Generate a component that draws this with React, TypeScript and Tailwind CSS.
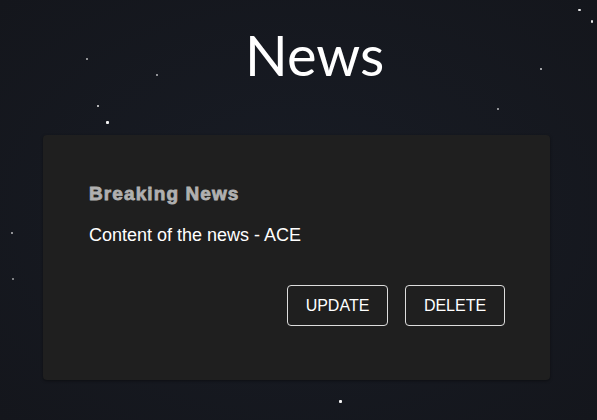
import React from "react";

const stars: { x: number; y: number; w: number; h: number; o: number }[] = [
  { x: 578, y: 9, w: 3, h: 2, o: 0.9 },
  { x: 591, y: 20, w: 2, h: 3, o: 0.9 },
  { x: 540, y: 68, w: 2, h: 2, o: 0.8 },
  { x: 497, y: 108, w: 2, h: 2, o: 0.7 },
  { x: 86, y: 58, w: 2, h: 2, o: 0.7 },
  { x: 156, y: 74, w: 2, h: 2, o: 0.7 },
  { x: 97, y: 105, w: 2, h: 2, o: 0.9 },
  { x: 106, y: 121, w: 3, h: 3, o: 0.95 },
  { x: 11, y: 232, w: 2, h: 2, o: 0.7 },
  { x: 12, y: 278, w: 2, h: 2, o: 0.6 },
  { x: 339, y: 400, w: 3, h: 3, o: 0.95 },
];

export default function App() {
  return (
    <div className="relative w-[597px] h-[420px] overflow-hidden bg-[radial-gradient(ellipse_at_center,#181c25_0%,#14161c_100%)]">
      {stars.map((s, i) => (
        <div
          key={i}
          className="absolute bg-white rounded-[1px]"
          style={{ left: s.x, top: s.y, width: s.w, height: s.h, opacity: s.o }}
        />
      ))}
      <div className="relative flex flex-col pt-[27px] pl-[43px]">
        <h1
          className="ml-[202px] text-[56px] leading-none text-white"
          style={{ fontFamily: "Lato, 'Open Sans', sans-serif", fontWeight: 400 }}
        >
          News
        </h1>
        <div
          className="mt-[52px] w-[507px] h-[245px] bg-[#1f1f1f] rounded-[4px] shadow-[0_1px_3px_rgba(0,0,0,0.4)] pt-[48px] pl-[46px] pr-[45px] flex flex-col"
          style={{ fontFamily: "'Liberation Sans', Arial, sans-serif" }}
        >
          <div className="text-[19px] leading-[22px] font-bold text-[#b0b0b0] tracking-[1.1px] [-webkit-text-stroke:0.8px_#b0b0b0]">
            Breaking News
          </div>
          <div className="mt-[20px] text-[18px] leading-[21px] text-white">
            Content of the news - ACE
          </div>
          <div className="mt-[39px] flex justify-end gap-[17px]">
            <button className="w-[101px] h-[41px] border border-[#dddddd] rounded-[4px] text-white text-[16px] flex items-center justify-center">
              UPDATE
            </button>
            <button className="w-[100px] h-[41px] border border-[#dddddd] rounded-[4px] text-white text-[16px] flex items-center justify-center">
              DELETE
            </button>
          </div>
        </div>
      </div>
    </div>
  );
}
